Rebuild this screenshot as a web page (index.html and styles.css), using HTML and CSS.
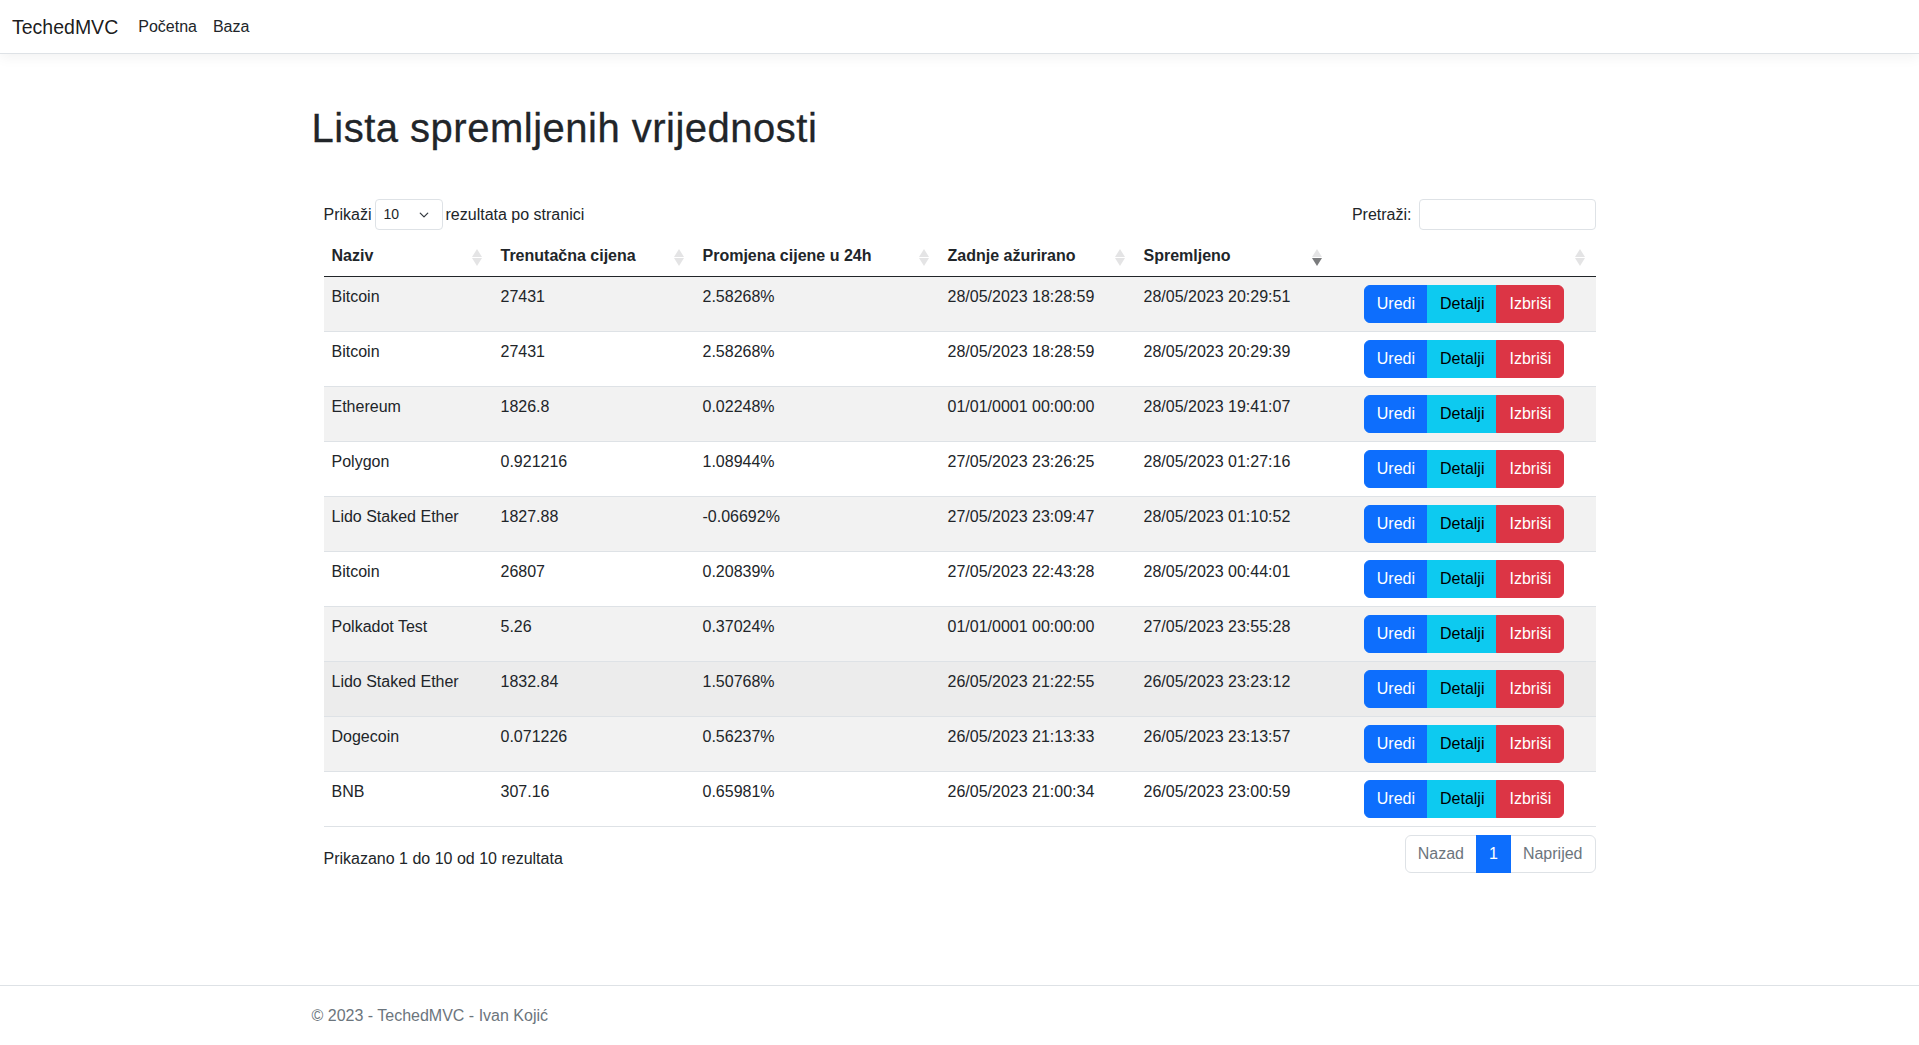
FILE: index.html
```html
<!DOCTYPE html>
<html lang="hr">
<head>
<meta charset="utf-8">
<title>Lista spremljenih vrijednosti - TechedMVC</title>
<link rel="stylesheet" href="styles.css">
</head>
<body>
<header class="navbar">
  <a class="brand" href="#">TechedMVC</a>
  <nav class="nav">
    <a class="nav-link" href="#">Početna</a>
    <a class="nav-link" href="#">Baza</a>
  </nav>
</header>

<div class="container main">
  <h1 class="title">Lista spremljenih vrijednosti</h1>

  <div class="wrapper">
    <div class="controls">
      <label class="length">Prikaži
        <span class="select">10
          <svg class="chev" viewBox="0 0 16 16" width="16" height="12"><path d="m2 5 6 6 6-6" fill="none" stroke="#343a40" stroke-width="2" stroke-linecap="round" stroke-linejoin="round"/></svg>
        </span>
        rezultata po stranici</label>
      <label class="filter">Pretraži:<input class="search" type="search"></label>
    </div>

    <table class="dt">
      <colgroup>
        <col class="c1"><col class="c2"><col class="c3"><col class="c4"><col class="c5"><col class="c6">
      </colgroup>
      <thead>
        <tr>
          <th class="sorting">Naziv</th>
          <th class="sorting">Trenutačna cijena</th>
          <th class="sorting">Promjena cijene u 24h</th>
          <th class="sorting">Zadnje ažurirano</th>
          <th class="sorting sorting-desc">Spremljeno</th>
          <th class="sorting"></th>
        </tr>
      </thead>
      <tbody>
        <tr><td>Bitcoin</td><td>27431</td><td>2.58268%</td><td>28/05/2023 18:28:59</td><td>28/05/2023 20:29:51</td><td class="act"><div class="btn-group"><a class="btn btn-primary">Uredi</a><a class="btn btn-info">Detalji</a><a class="btn btn-danger">Izbriši</a></div></td></tr>
        <tr><td>Bitcoin</td><td>27431</td><td>2.58268%</td><td>28/05/2023 18:28:59</td><td>28/05/2023 20:29:39</td><td class="act"><div class="btn-group"><a class="btn btn-primary">Uredi</a><a class="btn btn-info">Detalji</a><a class="btn btn-danger">Izbriši</a></div></td></tr>
        <tr><td>Ethereum</td><td>1826.8</td><td>0.02248%</td><td>01/01/0001 00:00:00</td><td>28/05/2023 19:41:07</td><td class="act"><div class="btn-group"><a class="btn btn-primary">Uredi</a><a class="btn btn-info">Detalji</a><a class="btn btn-danger">Izbriši</a></div></td></tr>
        <tr><td>Polygon</td><td>0.921216</td><td>1.08944%</td><td>27/05/2023 23:26:25</td><td>28/05/2023 01:27:16</td><td class="act"><div class="btn-group"><a class="btn btn-primary">Uredi</a><a class="btn btn-info">Detalji</a><a class="btn btn-danger">Izbriši</a></div></td></tr>
        <tr><td>Lido Staked Ether</td><td>1827.88</td><td>-0.06692%</td><td>27/05/2023 23:09:47</td><td>28/05/2023 01:10:52</td><td class="act"><div class="btn-group"><a class="btn btn-primary">Uredi</a><a class="btn btn-info">Detalji</a><a class="btn btn-danger">Izbriši</a></div></td></tr>
        <tr><td>Bitcoin</td><td>26807</td><td>0.20839%</td><td>27/05/2023 22:43:28</td><td>28/05/2023 00:44:01</td><td class="act"><div class="btn-group"><a class="btn btn-primary">Uredi</a><a class="btn btn-info">Detalji</a><a class="btn btn-danger">Izbriši</a></div></td></tr>
        <tr><td>Polkadot Test</td><td>5.26</td><td>0.37024%</td><td>01/01/0001 00:00:00</td><td>27/05/2023 23:55:28</td><td class="act"><div class="btn-group"><a class="btn btn-primary">Uredi</a><a class="btn btn-info">Detalji</a><a class="btn btn-danger">Izbriši</a></div></td></tr>
        <tr class="hover"><td>Lido Staked Ether</td><td>1832.84</td><td>1.50768%</td><td>26/05/2023 21:22:55</td><td>26/05/2023 23:23:12</td><td class="act"><div class="btn-group"><a class="btn btn-primary">Uredi</a><a class="btn btn-info">Detalji</a><a class="btn btn-danger">Izbriši</a></div></td></tr>
        <tr><td>Dogecoin</td><td>0.071226</td><td>0.56237%</td><td>26/05/2023 21:13:33</td><td>26/05/2023 23:13:57</td><td class="act"><div class="btn-group"><a class="btn btn-primary">Uredi</a><a class="btn btn-info">Detalji</a><a class="btn btn-danger">Izbriši</a></div></td></tr>
        <tr><td>BNB</td><td>307.16</td><td>0.65981%</td><td>26/05/2023 21:00:34</td><td>26/05/2023 23:00:59</td><td class="act"><div class="btn-group"><a class="btn btn-primary">Uredi</a><a class="btn btn-info">Detalji</a><a class="btn btn-danger">Izbriši</a></div></td></tr>
      </tbody>
    </table>

    <div class="bottom">
      <div class="info">Prikazano 1 do 10 od 10 rezultata</div>
      <ul class="pagination">
        <li class="page-item disabled"><span class="page-link">Nazad</span></li>
        <li class="page-item active"><span class="page-link">1</span></li>
        <li class="page-item disabled"><span class="page-link">Naprijed</span></li>
      </ul>
    </div>
  </div>
</div>

<footer class="footer">
  <div class="container">© 2023 - TechedMVC - Ivan Kojić</div>
</footer>
</body>
</html>
```

FILE: styles.css
```css
* { box-sizing: border-box; }
html, body { margin: 0; padding: 0; }
body {
  font-family: "Liberation Sans", Arial, sans-serif;
  font-size: 16px;
  line-height: 1.5;
  color: #212529;
  background: #fff;
  min-height: 100vh;
  display: flex;
  flex-direction: column;
}
a { text-decoration: none; }

.navbar {
  height: 54px;
  display: flex;
  align-items: center;
  padding: 0 12px;
  background: #fff;
  border-bottom: 1px solid #dee2e6;
  box-shadow: 0 4px 12px rgba(0, 0, 0, 0.05);
}
.brand {
  font-size: 19.5px;
  line-height: 30px;
  color: rgba(0, 0, 0, 0.9);
  margin-right: 12px;
}
.nav { display: flex; }
.nav-link {
  padding: 8px;
  color: #212529;
  line-height: 24px;
}

.container {
  width: 1320px;
  margin: 0 auto;
  padding: 0 12px;
}
.title {
  font-size: 40px;
  font-weight: 400;
  line-height: 1.2;
  letter-spacing: 0.5px;
  margin: 50px 0 8px;
  -webkit-text-stroke: 0.3px #212529;
}
.wrapper { padding: 39px 12px 0; }

.controls {
  display: flex;
  justify-content: space-between;
  align-items: center;
  height: 31px;
}
.length, .filter {
  display: flex;
  align-items: center;
  white-space: nowrap;
  gap: 3px;
}
.select {
  display: inline-flex;
  align-items: center;
  justify-content: space-between;
  width: 68px;
  height: 31px;
  padding: 0 8px;
  border: 1px solid #dee2e6;
  border-radius: 4px;
  font-size: 14px;
}
.chev { width: 14px; height: 10px; margin-right: 3px; }
.filter { gap: 7px; }
.search {
  width: 177px;
  height: 31px;
  border: 1px solid #dee2e6;
  border-radius: 4px;
  padding: 4px 8px;
  font: inherit;
  font-size: 14px;
}

.dt {
  width: 1272px;
  table-layout: fixed;
  border-collapse: separate;
  border-spacing: 0;
  margin: 6px 0;
}
.c1 { width: 169px; }
.c2 { width: 202px; }
.c3 { width: 245px; }
.c4 { width: 196px; }
.c5 { width: 197px; }
.c6 { width: 263px; }

.dt th {
  position: relative;
  text-align: left;
  font-weight: 700;
  padding: 8px 26px 8px 8px;
  line-height: 24px;
  border-bottom: 1px solid #212529;
  white-space: nowrap;
}
.sorting::before, .sorting::after {
  content: "";
  position: absolute;
  right: 11px;
  width: 0;
  height: 0;
  border-left: 5px solid transparent;
  border-right: 5px solid transparent;
}
.sorting::before {
  top: 13px;
  border-bottom: 8px solid #e4e4e5;
}
.sorting::after {
  top: 22px;
  border-top: 8px solid #e4e4e5;
}
.sorting-desc::after { border-top-color: #7a7b7d; }

.dt td {
  padding: 8px;
  line-height: 24px;
  vertical-align: top;
  border-bottom: 1px solid #dee2e6;
  white-space: nowrap;
}
.dt tbody tr:nth-child(odd) td { background: #f2f2f2; }
.dt tbody tr.hover td { background: #ececec; }
.dt td.act { text-align: center; }

.btn-group { display: inline-flex; }
.btn {
  display: inline-block;
  padding: 6px 12px;
  font-size: 16px;
  line-height: 24px;
  border: 1px solid transparent;
  cursor: pointer;
}
.btn + .btn { margin-left: -1px; }
.btn:first-child { border-radius: 6px 0 0 6px; }
.btn:last-child { border-radius: 0 6px 6px 0; }
.btn-primary { background: #0d6efd; border-color: #0d6efd; color: #fff; }
.btn-info { background: #0dcaf0; border-color: #0dcaf0; color: #000; }
.btn-danger { background: #dc3545; border-color: #dc3545; color: #fff; }

.bottom {
  display: flex;
  justify-content: space-between;
  align-items: flex-start;
}
.info { padding-top: 13.6px; }
.pagination {
  display: flex;
  list-style: none;
  padding: 0;
  margin: 2px 0 0;
}
.page-link {
  display: block;
  padding: 6px 12px;
  line-height: 24px;
  border: 1px solid #dee2e6;
  color: #0d6efd;
  background: #fff;
  position: relative;
}
.page-item + .page-item .page-link { margin-left: -1px; }
.page-item:first-child .page-link { border-radius: 6px 0 0 6px; }
.page-item:last-child .page-link { border-radius: 0 6px 6px 0; }
.page-item.disabled .page-link { color: #6c757d; }
.page-item.active .page-link {
  background: #0d6efd;
  border-color: #0d6efd;
  color: #fff;
  z-index: 2;
}

.footer {
  margin-top: auto;
  border-top: 1px solid #dee2e6;
  line-height: 59px;
  color: #6c757d;
  white-space: nowrap;
}
```
